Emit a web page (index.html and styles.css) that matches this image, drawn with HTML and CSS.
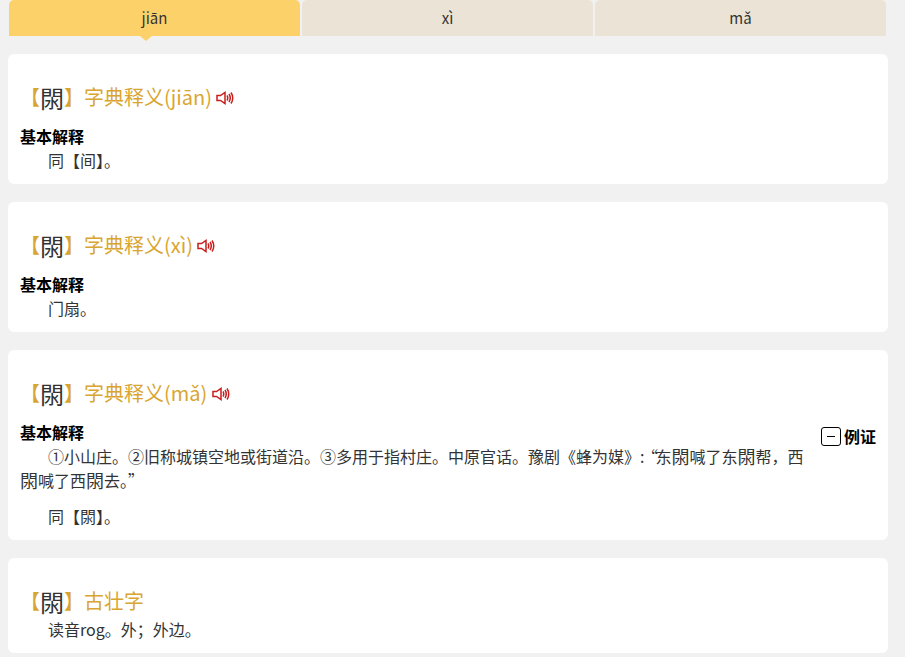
FILE: index.html
```html
<!DOCTYPE html>
<html lang="zh-CN">
<head>
  <meta charset="UTF-8" />
  <title>字典释义</title>
  <link rel="stylesheet" href="styles.css">
</head>
<body>
  <div class="tabs">
    <div class="tab active">jiān</div>
    <div class="tab">xì</div>
    <div class="tab">mǎ</div>
  </div>

  <div class="card">
    <h2 class="head"><span class="bracket">【<span class="zi">閖</span>】</span>字典释义(jiān)
      <svg class="sound" viewBox="0 0 18 14"><path d="M1 4.500h3.500L9 1.500v11L4.500 9.500H1z" fill="none" stroke="#c81e1e" stroke-width="1.500"/><path d="M11 4.500q1.500 2.500 0 5M13 3q2.500 4 0 8M15 1.500q3.500 5.500 0 11" fill="none" stroke="#c81e1e" stroke-width="1.500"/></svg>
    </h2>
    <div class="sub">基本解释</div>
    <p class="text">同【间】。</p>
  </div>

  <div class="card">
    <h2 class="head"><span class="bracket">【<span class="zi">閖</span>】</span>字典释义(xì)
      <svg class="sound" viewBox="0 0 18 14"><path d="M1 4.500h3.500L9 1.500v11L4.500 9.500H1z" fill="none" stroke="#c81e1e" stroke-width="1.500"/><path d="M11 4.500q1.500 2.500 0 5M13 3q2.500 4 0 8M15 1.500q3.500 5.500 0 11" fill="none" stroke="#c81e1e" stroke-width="1.500"/></svg>
    </h2>
    <div class="sub">基本解释</div>
    <p class="text">门扇。</p>
  </div>

  <div class="card">
    <h2 class="head"><span class="bracket">【<span class="zi">閖</span>】</span>字典释义(mǎ)
      <svg class="sound" viewBox="0 0 18 14"><path d="M1 4.500h3.500L9 1.500v11L4.500 9.500H1z" fill="none" stroke="#c81e1e" stroke-width="1.500"/><path d="M11 4.500q1.500 2.500 0 5M13 3q2.500 4 0 8M15 1.500q3.500 5.500 0 11" fill="none" stroke="#c81e1e" stroke-width="1.500"/></svg>
    </h2>
    <div class="with-side">
      <div class="main">
        <div class="sub">基本解释</div>
        <p class="text">①小山庄。②旧称城镇空地或街道沿。③多用于指村庄。中原官话。豫剧《蜂为媒》<span class="tight">:“</span>东<span class="zi-small">閖</span>喊了东<span class="zi-small">閖</span>帮&#xFF0C;西<span class="zi-small">閖</span>喊了西<span class="zi-small">閖</span>去。”</p>
        <p class="text gap">同【閖】。</p>
      </div>
      <div class="side"><span class="minus"></span>例证</div>
    </div>
  </div>

  <div class="card short">
    <h2 class="head"><span class="bracket">【<span class="zi">閖</span>】</span>古壮字</h2>
    <p class="text">读音rog。外&#xFF1B;外边。</p>
  </div>
</body>
</html>
```

FILE: styles.css
```css
html {
  height: 657px;
  overflow: hidden;
}
body {
  margin: 0;
  background: #f1f1f1;
  font-family: "Noto Sans CJK SC", "Noto Sans", sans-serif;
  color: #333;
}
.tabs {
  display: flex;
  gap: 2px;
  margin: 0 19px 18px 9px;
}
.tab {
  flex: 1;
  height: 36px;
  line-height: 36px;
  text-align: center;
  font-size: 15px;
  background: #ebe3d5;
  border-top-left-radius: 5px;
  border-top-right-radius: 5px;
  position: relative;
}
.tab.active {
  background: #fdd16a;
}
.tab.active::after {
  content: "";
  position: absolute;
  left: 50%;
  bottom: -5px;
  margin-left: -15px;
  border-left: 6px solid transparent;
  border-right: 6px solid transparent;
  border-top: 5px solid #fdd16a;
}
.card {
  background: #fff;
  margin: 0 17px 18px 8px;
  padding: 17px 12px 12px;
  border-radius: 6px;
}
.head {
  margin: 0 0 5px;
  padding-top: 2px;
  font-size: 20px;
  font-weight: 400;
  line-height: 48px;
  height: 46px;
  color: #d9a531;
}
.bracket {
  font-size: 20px;
}
.zi {
  font-size: 24px;
  line-height: 0;
  color: #333;
  vertical-align: -3px;
}
.zi-small {
  font-size: 18px;
  line-height: 0;
  vertical-align: -1px;
}
.tight {
  letter-spacing: -2.5px;
}
.sound {
  width: 18px;
  height: 14px;
}
.sub {
  font-size: 16px;
  font-weight: 700;
  line-height: 24px;
  color: #000;
}
.text {
  margin: 0;
  font-size: 16px;
  line-height: 24px;
  text-indent: 28px;
}
.gap {
  margin-top: 12px;
}
.with-side {
  display: flex;
  align-items: flex-start;
}
.main {
  flex: 1;
}
.side {
  width: 55px;
  margin-left: 16px;
  padding-top: 4px;
  font-size: 16px;
  font-weight: 700;
  color: #000;
  display: flex;
  align-items: center;
  gap: 3px;
}
.minus {
  flex: none;
  width: 20px;
  height: 19px;
  border: 1px solid #000;
  border-radius: 3px;
  box-sizing: border-box;
  position: relative;
}
.minus::after {
  content: "";
  position: absolute;
  left: 5px;
  right: 5px;
  top: 8px;
  height: 1px;
  background: #000;
}
.short .head {
  margin-bottom: -6px;
}
```
